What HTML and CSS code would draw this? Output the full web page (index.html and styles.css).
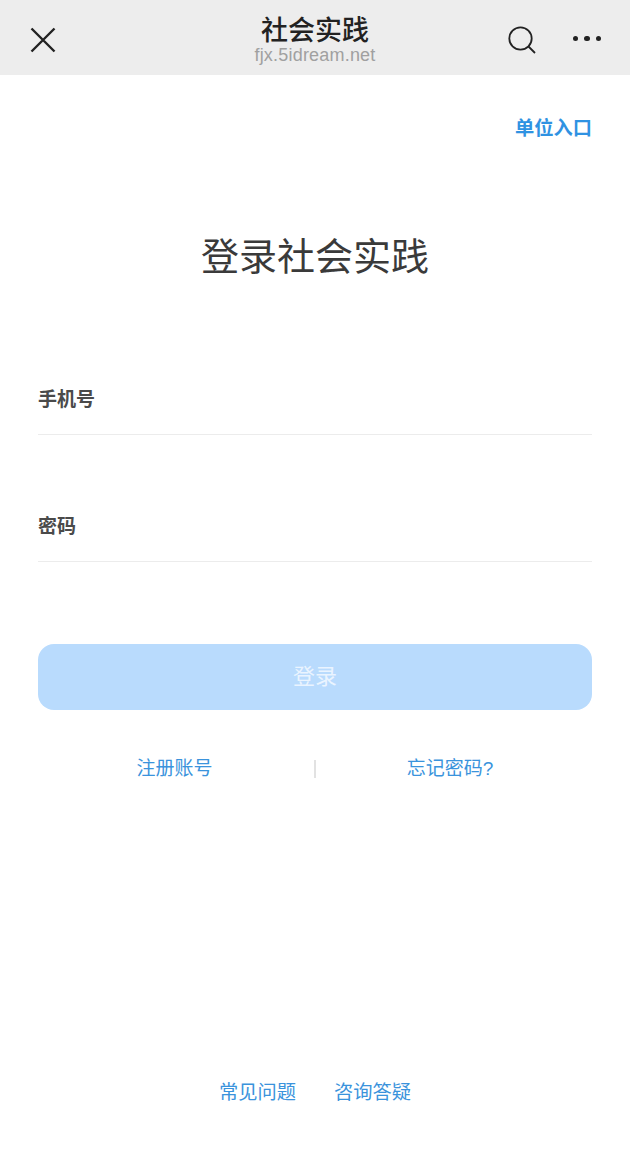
FILE: index.html
```html
<!DOCTYPE html>
<html lang="zh-CN">
<head>
<meta charset="utf-8">
<title>社会实践</title>
<link rel="stylesheet" href="styles.css">
</head>
<body>
<div class="page">
  <header class="navbar">
    <svg class="nav-icon close" viewBox="0 0 26 26"><path d="M1.5 1.5 24.5 24.5M24.5 1.5 1.5 24.5"/></svg>
    <div class="nav-title">
      <div class="nav-name">社会实践</div>
      <div class="nav-host">fjx.5idream.net</div>
    </div>
    <div class="nav-actions">
      <svg class="nav-icon search" viewBox="0 0 28 28"><circle cx="12.5" cy="12.5" r="11.2"/><path d="M20.5 20.5 27 27"/></svg>
      <div class="dots"><span></span><span></span><span></span></div>
    </div>
  </header>
  <main class="content">
    <div class="entry-row"><a class="entry">单位入口</a></div>
    <h1 class="heading">登录社会实践</h1>
    <div class="field first">手机号</div>
    <div class="field second">密码</div>
    <button class="submit">登录</button>
    <div class="links">
      <a class="link-cell register">注册账号</a>
      <span class="sep"></span>
      <a class="link-cell forgot">忘记密码?</a>
    </div>
    <div class="spacer"></div>
    <div class="footer-links"><a>常见问题</a><a>咨询答疑</a></div>
  </main>
</div>
</body>
</html>
```
FILE: styles.css
```css
* { box-sizing: border-box; }
html, body { margin: 0; height: 100%; background: #fff; }
body { font-family: "Liberation Sans", "Noto Sans CJK SC", sans-serif; }
.page { width: 630px; height: 1161px; display: flex; flex-direction: column; }

.navbar { height: 75px; background: #ededed; display: flex; align-items: center; padding: 4px 29px 0 30px; position: relative; flex: none; }
.nav-icon { fill: none; stroke: #222; }
.close { width: 26px; height: 26px; stroke-width: 2.4; }
.nav-title { position: absolute; left: 0; right: 0; top: 16px; text-align: center; }
.nav-name { font-size: 27px; line-height: 30px; color: #222; font-weight: 500; }
.nav-host { font-size: 18px; line-height: 18px; color: #a0a0a0; letter-spacing: 0.2px; }
.nav-actions { margin-left: auto; display: flex; align-items: center; gap: 37px; }
.search { width: 28px; height: 28px; stroke-width: 1.8; }
.dots { display: flex; gap: 6px; margin-top: -2px; }
.dots span { width: 5.5px; height: 5.5px; border-radius: 50%; background: #222; }

.content { flex: 1; padding: 0 38px; display: flex; flex-direction: column; }
.entry-row { display: flex; justify-content: flex-end; padding-top: 41px; }
.entry { font-size: 19.25px; line-height: 26px; font-weight: 700; color: #2f92e2; }
.heading { margin: 89px 0 0; font-size: 38px; line-height: 52px; font-weight: 400; color: #3a3a3a; text-align: center; }
.field { font-size: 19px; line-height: 26px; font-weight: 700; color: #4a4a4a; border-bottom: 1px solid #ececec; padding-bottom: 21px; }
.first { margin-top: 104px; }
.second { margin-top: 79px; }
.submit { margin-top: 82px; height: 66px; border: 0; border-radius: 16px; background: #b9dbfd; color: #eaf4ff; font: inherit; font-size: 22px; padding: 0 0 6px; }
.links { display: grid; grid-template-columns: 1fr 2px 1fr; align-items: center; margin-top: 46px; height: 26px; }
.link-cell { text-align: center; font-size: 19px; line-height: 26px; color: #3a93dc; }
.register { padding-right: 3px; }
.forgot { padding-right: 8px; }
.sep { width: 2px; height: 18px; background: #e2e2e2; }
.spacer { flex: 1; }
.footer-links { display: flex; justify-content: center; gap: 38px; padding-bottom: 55px; font-size: 19.25px; line-height: 26px; color: #3a93dc; }
```
